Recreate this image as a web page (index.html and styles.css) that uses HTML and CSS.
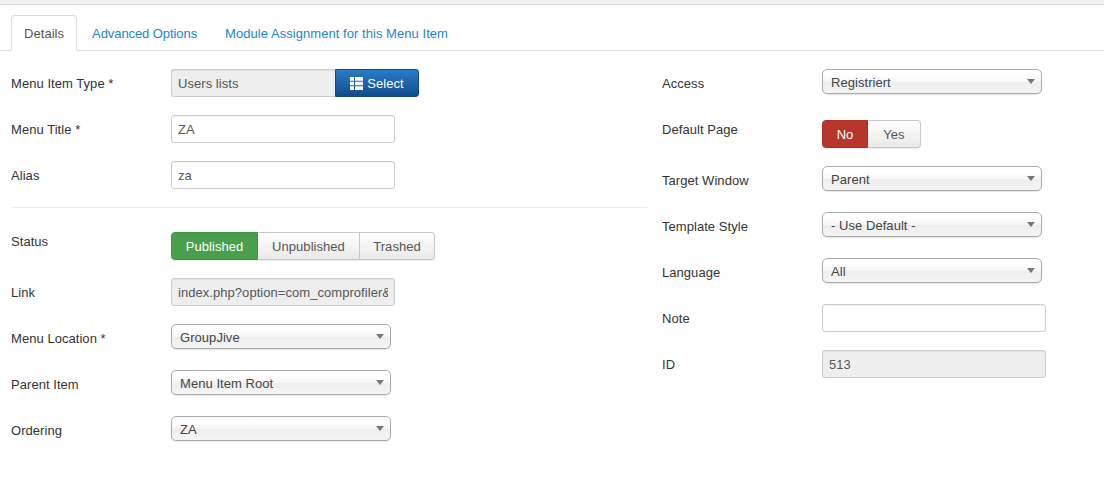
FILE: index.html
```html
<!DOCTYPE html>
<html lang="en">
<head>
<meta charset="utf-8">
<title>Menu Item</title>
<link rel="stylesheet" href="styles.css">
</head>
<body>
<div class="top-strip"></div>
<ul class="tabs">
  <li class="tab active"><a href="#details">Details</a></li>
  <li class="tab tab-adv"><a href="#advanced">Advanced Options</a></li>
  <li class="tab"><a href="#modules">Module Assignment for this Menu Item</a></li>
</ul>
<form class="columns">
  <div class="col col-left">
    <div class="row">
      <label class="label">Menu Item Type *</label>
      <div class="append">
        <input class="input input-type" type="text" value="Users lists" disabled>
        <button class="btn-select" type="button">
          <svg class="list-icon" width="13" height="13" viewBox="0 0 13 13" aria-hidden="true"><path fill="#fff" d="M0 0h4v3.7H0zM5 0h8v3.7H5zM0 4.65h4v3.7H0zM5 4.65h8v3.7H5zM0 9.3h4V13H0zM5 9.3h8V13H5z"/></svg>Select
        </button>
      </div>
    </div>
    <div class="row">
      <label class="label">Menu Title *</label>
      <input class="input" type="text" value="ZA">
    </div>
    <div class="row">
      <label class="label">Alias</label>
      <input class="input" type="text" value="za">
    </div>
    <hr class="divider">
    <div class="row">
      <label class="label label-top">Status</label>
      <div class="btn-group">
        <span class="seg seg-pub on-green">Published</span>
        <span class="seg seg-unpub">Unpublished</span>
        <span class="seg seg-trash">Trashed</span>
      </div>
    </div>
    <div class="row">
      <label class="label">Link</label>
      <input class="input" type="text" value="index.php?option=com_comprofiler&amp;view=userslist" disabled>
    </div>
    <div class="row">
      <label class="label">Menu Location *</label>
      <div class="select"><select><option>GroupJive</option></select></div>
    </div>
    <div class="row">
      <label class="label">Parent Item</label>
      <div class="select"><select><option>Menu Item Root</option></select></div>
    </div>
    <div class="row">
      <label class="label">Ordering</label>
      <div class="select"><select><option>ZA</option></select></div>
    </div>
  </div>
  <div class="col col-right">
    <div class="row">
      <label class="label">Access</label>
      <div class="select"><select><option>Registriert</option></select></div>
    </div>
    <div class="row row-default">
      <label class="label">Default Page</label>
      <div class="btn-group btn-group-low">
        <span class="seg seg-no on-red">No</span>
        <span class="seg seg-yes">Yes</span>
      </div>
    </div>
    <div class="row">
      <label class="label">Target Window</label>
      <div class="select"><select><option>Parent</option></select></div>
    </div>
    <div class="row">
      <label class="label">Template Style</label>
      <div class="select"><select><option>- Use Default -</option></select></div>
    </div>
    <div class="row">
      <label class="label">Language</label>
      <div class="select"><select><option>All</option></select></div>
    </div>
    <div class="row">
      <label class="label">Note</label>
      <input class="input" type="text" value="">
    </div>
    <div class="row">
      <label class="label">ID</label>
      <input class="input" type="text" value="513" disabled>
    </div>
  </div>
</form>
</body>
</html>
```
FILE: styles.css
```css
* { box-sizing: border-box; }
html, body { margin: 0; padding: 0; }
body {
  background: #fff;
  color: #333;
  font-family: "Liberation Sans", Arial, sans-serif;
  font-size: 13px;
  letter-spacing: 0.05px;
  height: 483px;
  overflow: hidden;
}
.top-strip {
  height: 5px;
  background: #f2f2f2;
  border-bottom: 1px solid #ddd;
}
.tabs {
  list-style: none;
  margin: 10px 0 0;
  padding: 0 0 0 11px;
  display: flex;
  gap: 3px;
  height: 36px;
  border-bottom: 1px solid #ddd;
}
.tab { height: 36px; }
.tab-adv { letter-spacing: -0.08px; margin-right: 1px; }
.tab a {
  display: block;
  height: 36px;
  line-height: 37px;
  padding: 0 12px;
  color: #2384d3;
  text-decoration: none;
  white-space: nowrap;
}
.tab.active a {
  color: #555;
  background: #fff;
  border: 1px solid #ddd;
  border-bottom-color: #fff;
  border-radius: 4px 4px 0 0;
  line-height: 35px;
}
.columns {
  display: flex;
  gap: 15px;
  padding: 18px 0 0 11px;
}
.col-left { width: 636px; }
.col-right { flex: 1; }
.row {
  display: flex;
  align-items: flex-start;
  height: 46px;
}
.row-default { height: 51px; }
.label {
  flex: 0 0 160px;
  padding-top: 1px;
  line-height: 28px;
  color: #333;
}
.label-top { line-height: 18px; }
.input {
  width: 224px;
  height: 28px;
  padding: 4px 6px;
  font: inherit;
  letter-spacing: inherit;
  color: #555;
  background: #fff;
  border: 1px solid #ccc;
  border-radius: 3px;
  box-shadow: inset 0 1px 1px rgba(0,0,0,.06);
  outline: none;
}
.input:disabled { background: #eee; color: #555; opacity: 1; -webkit-text-fill-color: #555; }
.append { display: flex; }
.input-type {
  width: 164px;
  border-right: 0;
  border-radius: 3px 0 0 3px;
}
.btn-select {
  width: 84px;
  height: 28px;
  padding: 0;
  font: inherit;
  letter-spacing: inherit;
  color: #fff;
  border: 1px solid #14467f;
  border-radius: 0 3px 3px 0;
  background: linear-gradient(#2a7cc8, #124c8a);
  display: flex;
  align-items: center;
  justify-content: center;
  gap: 4px;
}
.list-icon { display: block; }
.btn-group { display: flex; height: 28px; }
.btn-group-low { margin-top: 5px; }
.seg {
  display: block;
  height: 28px;
  line-height: 27px;
  text-align: center;
  color: #555;
  background: linear-gradient(#fff, #e9e9e9);
  border: 1px solid #c9c9c9;
  border-left-width: 0;
  box-shadow: 0 1px 1px rgba(0,0,0,.08);
}
.seg:first-child { border-left-width: 1px; border-radius: 4px 0 0 4px; }
.seg:last-child { border-radius: 0 4px 4px 0; }
.seg-pub { width: 87px; }
.seg-unpub { width: 102px; }
.seg-trash { width: 75px; }
.seg-no { width: 46px; }
.seg-yes { width: 53px; }
.on-green { background: #4a9f4c; border-color: #43924a; color: #fff; }
.on-red { background: #b8352c; border-color: #a9302a; color: #fff; }
.divider {
  height: 1px;
  margin: 0 0 24px;
  border: 0;
  background: #eee;
}
.select {
  position: relative;
  width: 220px;
  height: 25px;
}
.select select {
  appearance: none;
  -webkit-appearance: none;
  display: block;
  width: 100%;
  height: 25px;
  padding: 1px 24px 0 8px;
  font: inherit;
  letter-spacing: inherit;
  color: #444;
  border: 1px solid #aaa;
  border-radius: 5px;
  background: linear-gradient(#fff 20%, #f6f6f6 50%, #eee 52%, #f4f4f4);
  box-shadow: 0 1px 1px rgba(0,0,0,.1);
  outline: none;
}
.select::after {
  content: "";
  position: absolute;
  right: 7px;
  top: 10px;
  border-style: solid;
  border-width: 5px 4.5px 0;
  border-color: #777 transparent transparent;
  pointer-events: none;
}
```
